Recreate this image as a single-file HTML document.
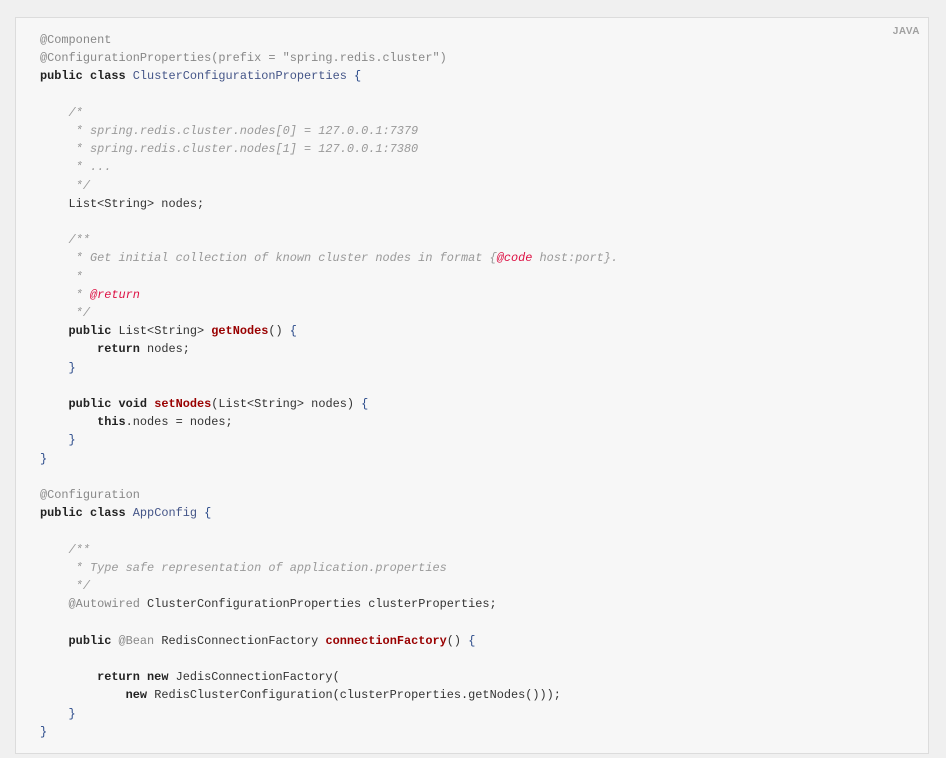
<!DOCTYPE html>
<html><head><meta charset="utf-8"><style>
html,body{margin:0;padding:0;background:#f0f0f0;width:946px;height:758px;overflow:hidden}
.box{position:absolute;left:15px;top:17px;width:912px;height:735px;background:#f7f7f7;border:1px solid #dcdcdc}
.lang{position:absolute;right:8px;top:8px;font:bold 10px "Liberation Sans",sans-serif;color:#a0a0a0;letter-spacing:.5px}
pre{position:absolute;left:24px;top:13px;margin:0;font-family:"Liberation Mono",monospace;font-size:11.9px;line-height:18.2px;color:#333}
.a{color:#888}.k{font-weight:bold;color:#222}.t{color:#445588}.f{color:#990000;font-weight:bold}
.c{color:#999;font-style:italic}.r{color:#dd1144}.b{color:#2a4a8a}
</style></head><body><div class="box"><div class="lang">JAVA</div><pre><span class="a">@Component</span>
<span class="a">@ConfigurationProperties(prefix = "spring.redis.cluster")</span>
<span class="k">public class</span> <span class="t">ClusterConfigurationProperties</span> <span class="b">{</span>

    <span class="c">/*
     * spring.redis.cluster.nodes[0] = 127.0.0.1:7379
     * spring.redis.cluster.nodes[1] = 127.0.0.1:7380
     * ...
     */</span>
    List&lt;String&gt; nodes;

    <span class="c">/**
     * Get initial collection of known cluster nodes in format {<span class="r">@code</span> host:port}.
     *
     * <span class="r">@return</span>
     */</span>
    <span class="k">public</span> List&lt;String&gt; <span class="f">getNodes</span>() <span class="b">{</span>
        <span class="k">return</span> nodes;
    <span class="b">}</span>

    <span class="k">public void</span> <span class="f">setNodes</span>(List&lt;String&gt; nodes) <span class="b">{</span>
        <span class="k">this</span>.nodes = nodes;
    <span class="b">}</span>
<span class="b">}</span>

<span class="a">@Configuration</span>
<span class="k">public class</span> <span class="t">AppConfig</span> <span class="b">{</span>

    <span class="c">/**
     * Type safe representation of application.properties
     */</span>
    <span class="a">@Autowired</span> ClusterConfigurationProperties clusterProperties;

    <span class="k">public</span> <span class="a">@Bean</span> RedisConnectionFactory <span class="f">connectionFactory</span>() <span class="b">{</span>

        <span class="k">return new</span> JedisConnectionFactory(
            <span class="k">new</span> RedisClusterConfiguration(clusterProperties.getNodes()));
    <span class="b">}</span>
<span class="b">}</span></pre></div></body></html>
